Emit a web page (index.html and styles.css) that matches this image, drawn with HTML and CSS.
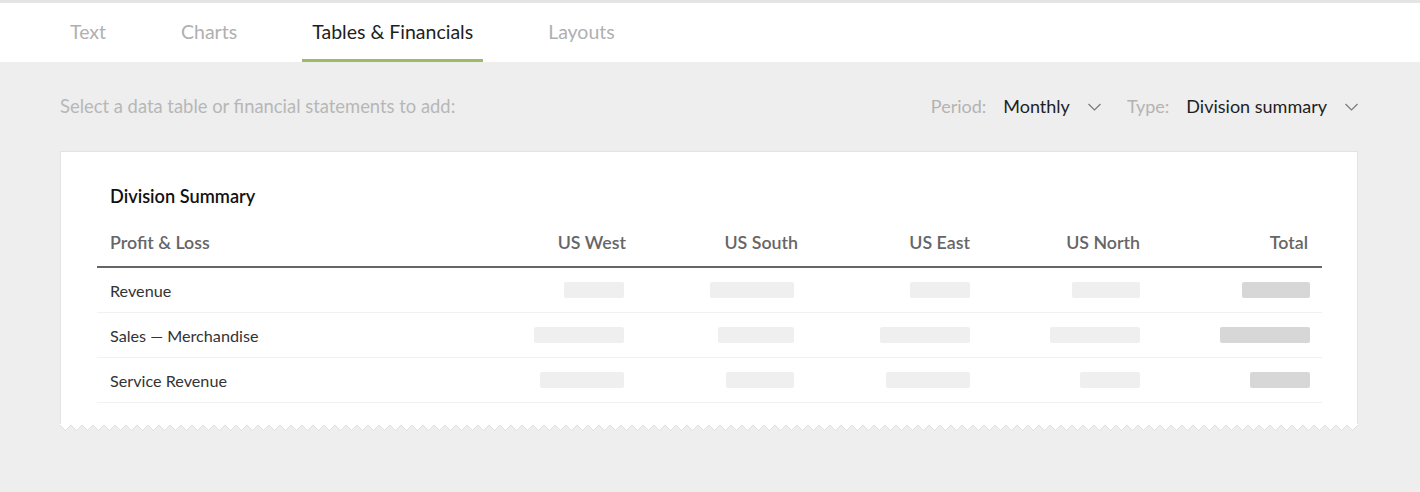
FILE: index.html
```html
<!DOCTYPE html>
<html lang="en">
<head>
<meta charset="utf-8">
<title>Tables &amp; Financials</title>
<link rel="stylesheet" href="styles.css">
</head>
<body>
<header class="topbar">
  <nav class="tabs">
    <a class="tab">Text</a>
    <a class="tab">Charts</a>
    <a class="tab tab-active">Tables &amp; Financials</a>
    <a class="tab">Layouts</a>
  </nav>
</header>
<main class="panel">
  <div class="toolbar">
    <p class="hint">Select a data table or financial statements to add:</p>
    <div class="filters">
      <div class="filter">
        <span class="filter-label">Period:</span>
        <span class="filter-value">Monthly</span>
        <svg class="chevron" width="13" height="8" viewBox="0 0 13 8"><path d="M0.5 1 L6.5 7 L12.5 1" fill="none" stroke="#7a7a7a" stroke-width="1.2"/></svg>
      </div>
      <div class="filter">
        <span class="filter-label">Type:</span>
        <span class="filter-value">Division summary</span>
        <svg class="chevron" width="13" height="8" viewBox="0 0 13 8"><path d="M0.5 1 L6.5 7 L12.5 1" fill="none" stroke="#7a7a7a" stroke-width="1.2"/></svg>
      </div>
    </div>
  </div>
  <section class="card">
    <h2 class="card-title">Division Summary</h2>
    <div class="table">
      <div class="row row-head">
        <span class="cell cell-label">Profit &amp; Loss</span>
        <span class="cell">US West</span>
        <span class="cell">US South</span>
        <span class="cell">US East</span>
        <span class="cell">US North</span>
        <span class="cell">Total</span>
      </div>
      <div class="row">
        <span class="cell cell-label">Revenue</span>
        <span class="cell"><i class="bar" style="width:60px"></i></span>
        <span class="cell"><i class="bar" style="width:84px"></i></span>
        <span class="cell"><i class="bar" style="width:60px"></i></span>
        <span class="cell"><i class="bar" style="width:68px"></i></span>
        <span class="cell"><i class="bar bar-total" style="width:68px"></i></span>
      </div>
      <div class="row">
        <span class="cell cell-label">Sales — Merchandise</span>
        <span class="cell"><i class="bar" style="width:90px"></i></span>
        <span class="cell"><i class="bar" style="width:76px"></i></span>
        <span class="cell"><i class="bar" style="width:90px"></i></span>
        <span class="cell"><i class="bar" style="width:90px"></i></span>
        <span class="cell"><i class="bar bar-total" style="width:90px"></i></span>
      </div>
      <div class="row">
        <span class="cell cell-label">Service Revenue</span>
        <span class="cell"><i class="bar" style="width:84px"></i></span>
        <span class="cell"><i class="bar" style="width:68px"></i></span>
        <span class="cell"><i class="bar" style="width:84px"></i></span>
        <span class="cell"><i class="bar" style="width:60px"></i></span>
        <span class="cell"><i class="bar bar-total" style="width:60px"></i></span>
      </div>
    </div>
  </section>
</main>
</body>
</html>
```
FILE: styles.css
```css
* { box-sizing: border-box; }

html, body {
  margin: 0;
  padding: 0;
}

body {
  background: #eeeeee;
  font-family: Lato, "Noto Sans", "Liberation Sans", sans-serif;
  color: #222;
  height: 492px;
  overflow: hidden;
}

.topbar {
  background: #fff;
  border-top: 3px solid #e4e4e4;
  height: 62px;
}

.tabs {
  display: flex;
  gap: 55px;
  padding-left: 60px;
  height: 100%;
}

.tab {
  display: flex;
  align-items: center;
  padding: 2px 10px 0;
  font-size: 19.5px;
  color: #b0b0b0;
  border-bottom: 3px solid transparent;
  line-height: 1;
}

.tab-active {
  color: #1e1e1e;
  border-bottom-color: #9dbb62;
}

.panel {
  padding: 32px 62px 0 60px;
}

.toolbar {
  display: flex;
  justify-content: space-between;
  align-items: center;
  height: 24px;
}

.hint {
  margin: 0;
  font-size: 18.4px;
  color: #b7b7b7;
  line-height: 24px;
}

.filters {
  display: flex;
  gap: 26px;
  align-items: center;
}

.filter {
  display: flex;
  align-items: center;
  font-size: 18px;
  line-height: 24px;
}

.filter-label {
  color: #b3b3b3;
  margin-right: 17px;
}

.filter-value {
  color: #1e1e1e;
  margin-right: 18px;
}

.chevron {
  display: block;
  margin-top: 1px;
}

.card {
  position: relative;
  margin-top: 33px;
  width: 1298px;
  background: #fff;
  border: 1px solid #e3e3e3;
  border-bottom: none;
  padding: 32px 35px 21px 36px;
}

.card::after {
  content: "";
  position: absolute;
  left: -1px;
  right: -1px;
  top: 100%;
  height: 6px;
  background: conic-gradient(from -45deg at 50% 100%, #fff 90deg, transparent 0) 0 0 / 11px 6px repeat-x;
  filter: drop-shadow(0 1px 0 #e0e0e0);
}

.card-title {
  margin: 0 0 0 13px;
  font-size: 18.2px;
  font-weight: 600;
  line-height: 24px;
  color: #111;
}

.table {
  width: 1225px;
}

.row {
  display: grid;
  grid-template-columns: 369px 170px 170px 176px 170px 170px;
  align-items: center;
  height: 45px;
  border-bottom: 1px solid #f1f1f1;
  font-size: 16.2px;
  color: #333;
}

.row-head {
  height: 60px;
  padding: 22px 0 12px;
  border-bottom: 2px solid #666;
  font-size: 17.8px;
  font-weight: 600;
  color: #666;
  line-height: 24px;
}

.cell {
  display: flex;
  justify-content: flex-end;
  padding-right: 12px;
  white-space: nowrap;
}

.row-head .cell:nth-child(2) { padding-right: 10px; }
.row-head .cell:nth-child(3) { padding-right: 8px; }
.row-head .cell:nth-child(6) { padding-right: 14px; }

.cell-label {
  justify-content: flex-start;
  padding-left: 13px;
}

.bar {
  display: block;
  height: 16px;
  border-radius: 2px;
  background: #efefef;
}

.bar-total {
  background: #d7d7d7;
}
```
